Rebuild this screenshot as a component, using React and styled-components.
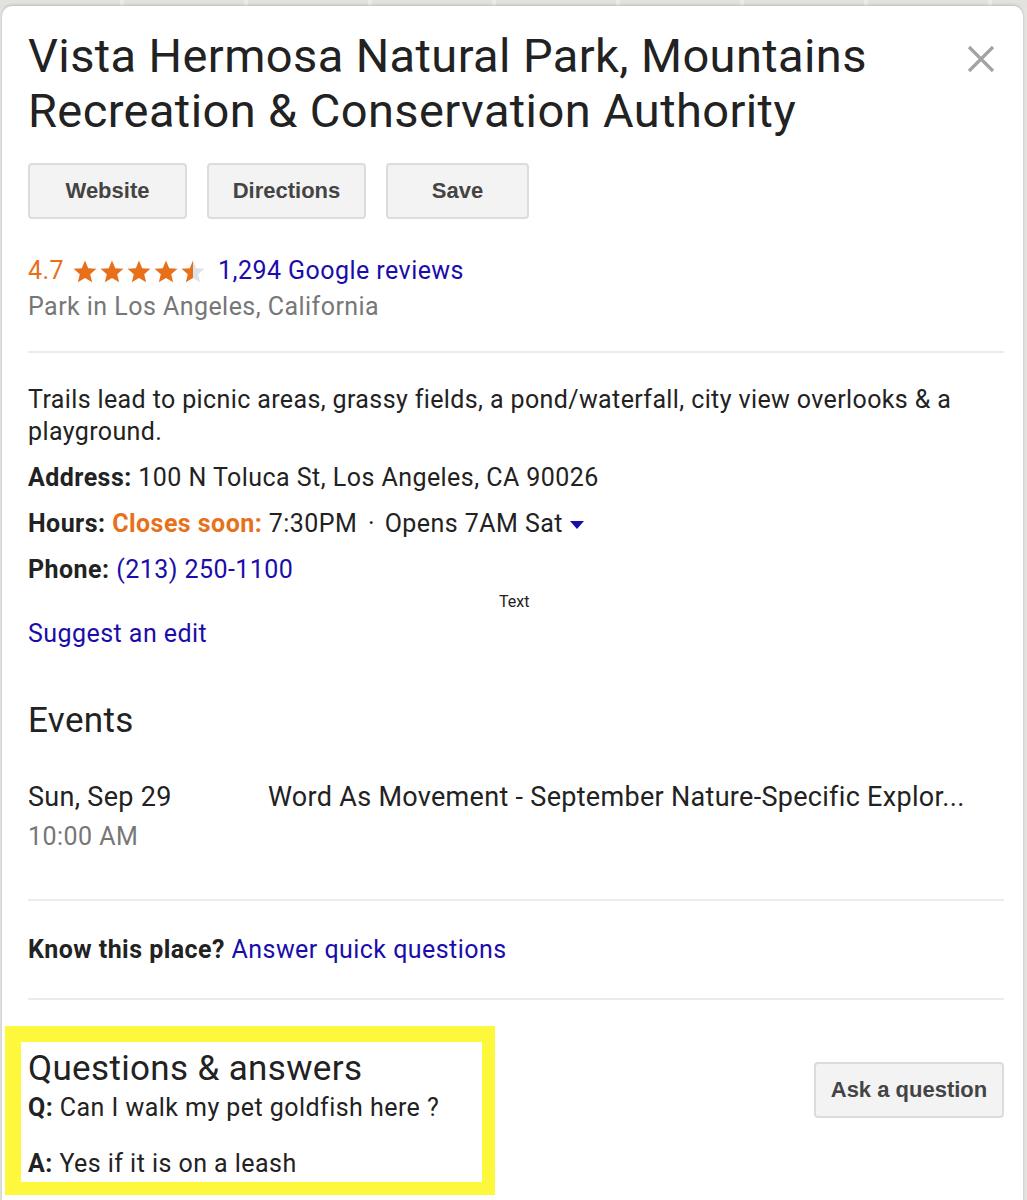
import React from "react";
import styled, { createGlobalStyle } from "styled-components";

const Global = createGlobalStyle`
  html, body { margin: 0; padding: 0; }
  body {
    background: #e6e4e0;
    font-family: Roboto, "Noto Sans", Arial, sans-serif;
    color: #222;
    overflow: hidden;
  }
  * { box-sizing: border-box; }
`;

const MapStrip = styled.div`
  height: 7px;
  background: repeating-linear-gradient(90deg, #e4e2de 0 120px, #eeece8 120px 124px);
`;

const Card = styled.div`
  margin: -1px 4px 0 2px;
  background: #fff;
  border-radius: 10px 10px 0 0;
  box-shadow: 0 -1px 3px rgba(0, 0, 0, 0.18);
  padding: 22px 19px 0 26px;
  min-height: 1200px;
`;

const Header = styled.div`
  display: flex;
  justify-content: space-between;
  align-items: flex-start;
`;

const Title = styled.h1`
  margin: 0;
  font-size: 47px;
  line-height: 55px;
  font-weight: 400;
  color: #222;
  letter-spacing: 0.4px;
`;

const Close = styled.button`
  border: 0;
  background: none;
  padding: 0;
  margin: 14px 6px 0 0;
  width: 34px;
  height: 34px;
  display: flex;
  align-items: center;
  justify-content: center;
`;

const Buttons = styled.div`
  display: flex;
  gap: 20px;
  margin-top: 25px;
`;

const Btn = styled.button`
  width: ${(p) => p.$w}px;
  height: 56px;
  background: #f3f3f3;
  border: 2px solid #dcdcdc;
  border-radius: 4px;
  font-family: "Liberation Sans", Arial, sans-serif;
  font-weight: 700;
  font-size: 22px;
  color: #444;
  padding: 0;
`;

const Line = styled.div`
  font-size: 25px;
  letter-spacing: 0.45px;
  line-height: 36px;
  color: ${(p) => p.$color || "#222"};
`;

const RatingLine = styled(Line)`
  margin-top: 34px;
  display: flex;
  align-items: center;
  gap: 8px;
`;

const Orange = styled.span`
  color: #e7711b;
  font-weight: ${(p) => (p.$bold ? 700 : 400)};
`;

const Link = styled.a`
  color: #1a0dab;
  text-decoration: none;
`;

const Stars = styled.span`
  display: inline-flex;
  gap: 1px;
  margin: 0 4px 0 0;
`;

const Divider = styled.hr`
  border: 0;
  border-top: 2px solid #ebebeb;
  margin: ${(p) => p.$m || "26px 0 0 0"};
`;

const Desc = styled.p`
  margin: 31px 0 0 0;
  font-size: 25px;
  letter-spacing: 0.38px;
  line-height: 32px;
  color: #222;
`;

const Info = styled.div`
  margin-top: 14px;
  font-size: 25px;
  letter-spacing: 0.45px;
  line-height: 32px;
  color: #222;
  white-space: nowrap;
`;

const Label = styled.b`
  font-weight: 700;
  color: #222;
`;

const Sep = styled.span`
  margin: 0 3px 0 4px;
`;

const Stray = styled.div`
  font-size: 16px;
  line-height: 20px;
  margin: 6px 0 0 471px;
  color: #222;
`;

const Suggest = styled.div`
  margin-top: 6px;
  font-size: 25px;
  letter-spacing: 0.45px;
  line-height: 32px;
`;

const Heading = styled.h2`
  margin: ${(p) => p.$m || "0"};
  font-size: 35px;
  letter-spacing: 0.35px;
  line-height: 42px;
  font-weight: 400;
  color: #222;
`;

const EventRow = styled.div`
  display: grid;
  grid-template-columns: 240px 1fr;
  margin-top: 35px;
  font-size: 27px;
  letter-spacing: 0.3px;
  line-height: 40px;
  white-space: nowrap;
`;

const Muted = styled.div`
  color: #777;
  font-size: 25px;
  letter-spacing: 0.45px;
`;

const KnowLine = styled.div`
  margin-top: 33px;
  font-size: 25px;
  letter-spacing: 0.45px;
  line-height: 32px;
`;

const QARow = styled.div`
  display: flex;
  justify-content: space-between;
  align-items: flex-start;
  margin-top: 26px;
`;

const Highlight = styled.div`
  margin-left: -23px;
  width: 490px;
  border: solid #fef83c;
  border-width: 16px 13px 13px 16px;
  padding: 6px 0 2px 7px;
  background: #fff;
`;

const QA = styled.div`
  font-size: 25px;
  letter-spacing: 0.45px;
  line-height: 32px;
  margin-top: ${(p) => p.$mt || 0}px;
`;

const AskBtn = styled(Btn)`
  margin-top: 36px;
`;

const CaretSvg = styled.svg`
  margin-left: 7px;
  vertical-align: middle;
`;

const Star = ({ half }) => (
  <svg width="26" height="25" viewBox="0 0 24 24">
    <defs>
      <linearGradient id="halfg" x1="0" x2="1" y1="0" y2="0">
        <stop offset="52%" stopColor="#e7711b" />
        <stop offset="52%" stopColor="#dde3ea" />
      </linearGradient>
    </defs>
    <path
      d="M12 1.5l3.1 7.3 7.9.6-6 5.2 1.9 7.8L12 18.2l-6.9 4.2 1.9-7.8-6-5.2 7.9-.6z"
      fill={half ? "url(#halfg)" : "#e7711b"}
    />
  </svg>
);

const Caret = () => (
  <CaretSvg width="14" height="8" viewBox="0 0 14 8">
    <path d="M0 0h14L7 8z" fill="#1a0dab" />
  </CaretSvg>
);

export default function App() {
  return (
    <>
      <Global />
      <MapStrip />
      <Card>
        <Header>
          <Title>
            Vista Hermosa Natural Park, Mountains
            <br />
            Recreation &amp; Conservation Authority
          </Title>
          <Close aria-label="Close">
            <svg width="30" height="30" viewBox="0 0 30 30">
              <path d="M3 3L27 27M27 3L3 27" stroke="#a3a3a3" strokeWidth="3.2" />
            </svg>
          </Close>
        </Header>

        <Buttons>
          <Btn $w={159}>Website</Btn>
          <Btn $w={159}>Directions</Btn>
          <Btn $w={143}>Save</Btn>
        </Buttons>

        <RatingLine>
          <Orange>4.7</Orange>
          <Stars>
            <Star />
            <Star />
            <Star />
            <Star />
            <Star half />
          </Stars>
          <Link href="#">1,294 Google reviews</Link>
        </RatingLine>
        <Line $color="#777">Park in Los Angeles, California</Line>

        <Divider />

        <Desc>
          Trails lead to picnic areas, grassy fields, a pond/waterfall, city view overlooks &amp; a
          playground.
        </Desc>
        <Info>
          <Label>Address:</Label> 100 N Toluca St, Los Angeles, CA 90026
        </Info>
        <Info>
          <Label>Hours:</Label> <Orange $bold>Closes soon:</Orange> 7:30PM <Sep>·</Sep> Opens 7AM Sat
          <Caret />
        </Info>
        <Info>
          <Label>Phone:</Label> <Link href="#">(213) 250-1100</Link>
        </Info>
        <Stray>Text</Stray>
        <Suggest>
          <Link href="#">Suggest an edit</Link>
        </Suggest>

        <Heading $m="50px 0 0 0">Events</Heading>
        <EventRow>
          <div>
            Sun, Sep 29
            <Muted>10:00 AM</Muted>
          </div>
          <div>Word As Movement - September Nature-Specific Explor...</div>
        </EventRow>

        <Divider $m="42px 0 0 0" />
        <KnowLine>
          <Label>Know this place?</Label> <Link href="#">Answer quick questions</Link>
        </KnowLine>
        <Divider $m="32px 0 0 0" />

        <QARow>
          <Highlight>
            <Heading>Questions &amp; answers</Heading>
            <QA $mt={2}>
              <Label>Q:</Label> Can I walk my pet goldfish here ?
            </QA>
            <QA $mt={24}>
              <Label>A:</Label> Yes if it is on a leash
            </QA>
          </Highlight>
          <AskBtn $w={190}>Ask a question</AskBtn>
        </QARow>
      </Card>
    </>
  );
}
